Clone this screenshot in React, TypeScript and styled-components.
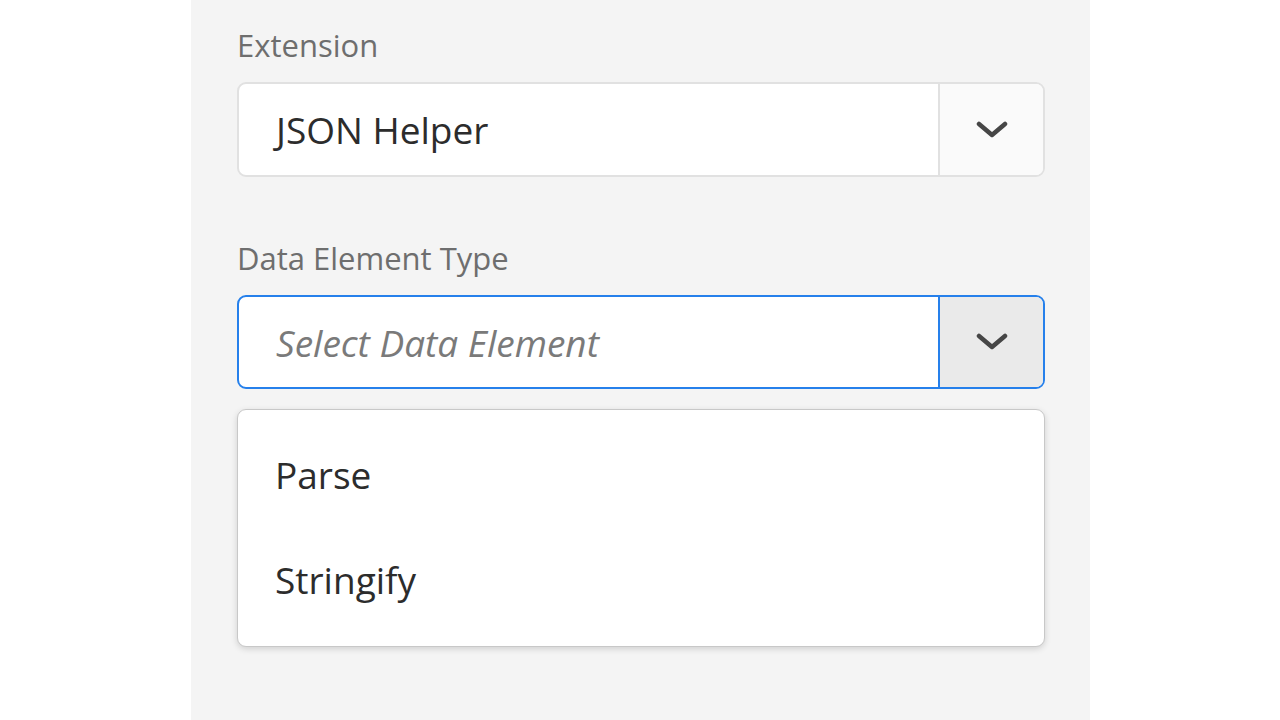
import React from "react";
import styled, { createGlobalStyle } from "styled-components";

const Global = createGlobalStyle`
  html, body { margin: 0; padding: 0; background: #ffffff; }
  body { font-family: "Open Sans", "Noto Sans", sans-serif; }
`;

const Page = styled.div`
  display: flex;
  justify-content: center;
  width: 1280px;
  height: 720px;
  overflow: hidden;
`;

const Panel = styled.div`
  box-sizing: border-box;
  width: 899px;
  margin-left: 1px;
  height: 720px;
  background: #f4f4f4;
  padding: 27px 45px 0 46px;
  display: flex;
  flex-direction: column;
`;

const Label = styled.div<{ $top?: number }>`
  font-size: 31px;
  line-height: 36px;
  color: #6e6e6e;
  margin-top: ${(p) => p.$top ?? 0}px;
  margin-bottom: 19px;
`;

const Field = styled.div<{ $focused?: boolean }>`
  box-sizing: border-box;
  height: ${(p) => (p.$focused ? 94 : 95)}px;
  display: flex;
  border: 2px solid ${(p) => (p.$focused ? "#2680eb" : "#e1e1e1")};
  border-radius: 9px;
  background: #ffffff;
  overflow: hidden;
`;

const Value = styled.div<{ $placeholder?: boolean }>`
  flex: 1;
  display: flex;
  align-items: center;
  padding-left: 37px;
  font-size: 37px;
  font-style: ${(p) => (p.$placeholder ? "italic" : "normal")};
  color: ${(p) => (p.$placeholder ? "#7a7a7a" : "#2c2c2c")};
`;

const Toggle = styled.div<{ $focused?: boolean }>`
  width: 103px;
  display: flex;
  align-items: center;
  justify-content: center;
  background: ${(p) => (p.$focused ? "#eaeaea" : "#fafafa")};
  border-left: 2px solid ${(p) => (p.$focused ? "#2680eb" : "#e1e1e1")};
`;

const Menu = styled.div`
  box-sizing: border-box;
  margin-top: 20px;
  height: 238px;
  background: #ffffff;
  border: 1px solid #c8c8c8;
  border-radius: 9px;
  box-shadow: 0 2px 6px rgba(0, 0, 0, 0.15);
  padding: 12px 0 14px;
  display: flex;
  flex-direction: column;
`;

const Item = styled.div`
  height: 105px;
  display: flex;
  align-items: center;
  padding-left: 37px;
  font-size: 37px;
  color: #2c2c2c;
`;

const Chevron = () => (
  <svg width="32" height="20" viewBox="0 0 32 20">
    <path
      d="M3 4 L16 15 L29 4"
      fill="none"
      stroke="#464646"
      strokeWidth="4.5"
      strokeLinecap="round"
      strokeLinejoin="round"
    />
  </svg>
);

export default function App() {
  return (
    <Page>
      <Global />
      <Panel>
        <Label>Extension</Label>
        <Field>
          <Value>JSON Helper</Value>
          <Toggle>
            <Chevron />
          </Toggle>
        </Field>
        <Label $top={63}>Data Element Type</Label>
        <Field $focused>
          <Value $placeholder>Select Data Element</Value>
          <Toggle $focused>
            <Chevron />
          </Toggle>
        </Field>
        <Menu>
          <Item>Parse</Item>
          <Item>Stringify</Item>
        </Menu>
      </Panel>
    </Page>
  );
}
